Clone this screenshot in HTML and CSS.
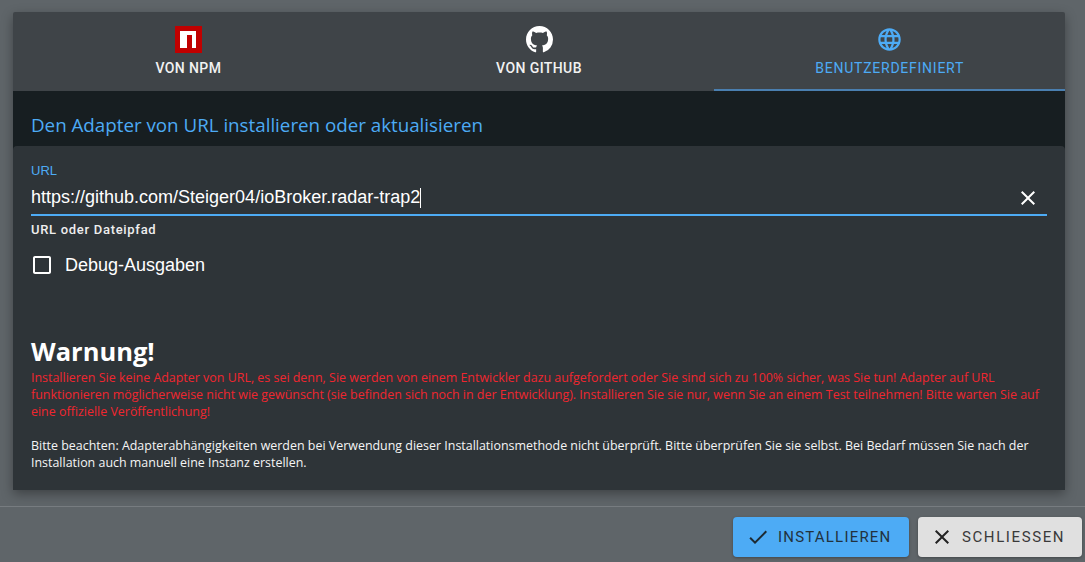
FILE: index.html
```html
<!DOCTYPE html>
<html lang="de">

<head>
    <meta charset="UTF-8">
    <meta name="viewport" content="width=device-width, initial-scale=1.0">
    <title>Adapter installieren</title>
    <link rel="stylesheet" href="styles.css">
</head>

<body>
    <div class="dialog">
        <div class="tabs">
            <div class="tab">
                <svg class="tab-icon" viewBox="0 0 27 27" width="27" height="27">
                    <rect width="27" height="27" fill="#c00000" />
                    <path d="M5 5h16v17h-4V9h-5v13H5z" fill="#fff" />
                </svg>
                <span>VON NPM</span>
            </div>
            <div class="tab">
                <svg class="tab-icon" viewBox="0 0 16 16" width="27" height="27">
                    <path fill="#fff" d="M8 0C3.58 0 0 3.58 0 8c0 3.54 2.29 6.53 5.47 7.59.4.07.55-.17.55-.38 0-.19-.01-.82-.01-1.49-2.01.37-2.53-.49-2.69-.94-.09-.23-.48-.94-.82-1.13-.28-.15-.68-.52-.01-.53.63-.01 1.08.58 1.23.82.72 1.21 1.87.87 2.33.66.07-.52.28-.87.51-1.07-1.78-.2-3.64-.89-3.64-3.95 0-.87.31-1.59.82-2.15-.08-.2-.36-1.02.08-2.12 0 0 .67-.21 2.2.82.64-.18 1.32-.27 2-.27s1.36.09 2 .27c1.53-1.04 2.2-.82 2.2-.82.44 1.1.16 1.92.08 2.12.51.56.82 1.27.82 2.15 0 3.07-1.87 3.75-3.65 3.95.29.25.54.73.54 1.48 0 1.07-.01 1.93-.01 2.2 0 .21.15.46.55.38A8.01 8.01 0 0 0 16 8c0-4.42-3.58-8-8-8z" />
                </svg>
                <span>VON GITHUB</span>
            </div>
            <div class="tab active">
                <svg class="tab-icon" viewBox="0 0 24 24" width="27" height="27">
                    <path fill="#4dabf5" d="M11.99 2C6.47 2 2 6.48 2 12s4.47 10 9.99 10C17.52 22 22 17.52 22 12S17.52 2 11.99 2zm6.93 6h-2.95c-.32-1.25-.78-2.45-1.38-3.56 1.84.63 3.37 1.91 4.33 3.56zM12 4.04c.83 1.2 1.48 2.53 1.91 3.96h-3.82c.43-1.43 1.08-2.76 1.91-3.96zM4.26 14C4.1 13.36 4 12.69 4 12s.1-1.36.26-2h3.38c-.08.66-.14 1.32-.14 2s.06 1.34.14 2H4.26zm.82 2h2.95c.32 1.25.78 2.45 1.38 3.56-1.84-.63-3.37-1.9-4.33-3.56zm2.95-8H5.08c.96-1.66 2.49-2.93 4.33-3.56C8.81 5.55 8.35 6.75 8.03 8zM12 19.96c-.83-1.2-1.48-2.53-1.91-3.96h3.82c-.43 1.43-1.08 2.76-1.91 3.96zM14.34 14H9.66c-.09-.66-.16-1.32-.16-2s.07-1.35.16-2h4.68c.09.65.16 1.32.16 2s-.07 1.34-.16 2zm.25 5.56c.6-1.11 1.06-2.31 1.38-3.56h2.95c-.96 1.65-2.49 2.93-4.33 3.56zM16.36 14c.08-.66.14-1.32.14-2s-.06-1.34-.14-2h3.38c.16.64.26 1.31.26 2s-.1 1.36-.26 2h-3.38z" />
                </svg>
                <span>BENUTZERDEFINIERT</span>
            </div>
        </div>

        <div class="dark-area">
            <h2 class="page-title">Den Adapter von URL installieren oder aktualisieren</h2>
            <div class="card">
                <label class="url-label" for="url">URL</label>
                <div class="url-row">
                    <div class="url-value" id="url">https://github.com/Steiger04/ioBroker.radar-trap2<span class="caret"></span></div>
                    <svg class="clear-icon" viewBox="0 0 24 24" width="24" height="24">
                        <path fill="#fff" d="M19 6.41 17.59 5 12 10.59 6.41 5 5 6.41 10.59 12 5 17.59 6.41 19 12 13.41 17.59 19 19 17.59 13.41 12z" />
                    </svg>
                </div>
                <div class="helper">URL oder Dateipfad</div>
                <div class="check-row">
                    <svg viewBox="0 0 24 24" width="24" height="24">
                        <path fill="#fff" d="M19 5v14H5V5h14m0-2H5c-1.1 0-2 .9-2 2v14c0 1.1.9 2 2 2h14c1.1 0 2-.9 2-2V5c0-1.1-.9-2-2-2z" />
                    </svg>
                    <span>Debug-Ausgaben</span>
                </div>
                <h1 class="warn-title">Warnung!</h1>
                <p class="warn-text">Installieren Sie keine Adapter von URL, es sei denn, Sie werden von einem Entwickler dazu aufgefordert oder Sie sind sich zu 100% sicher, was Sie tun! Adapter auf URL funktionieren möglicherweise nicht wie gewünscht (sie befinden sich noch in der Entwicklung). Installieren Sie sie nur, wenn Sie an einem Test teilnehmen! Bitte warten Sie auf eine offizielle Veröffentlichung!</p>
                <p class="note-text">Bitte beachten: Adapterabhängigkeiten werden bei Verwendung dieser Installationsmethode nicht überprüft. Bitte überprüfen Sie sie selbst. Bei Bedarf müssen Sie nach der Installation auch manuell eine Instanz erstellen.</p>
            </div>
        </div>
    </div>

    <div class="footer">
        <button class="btn btn-primary">
            <svg viewBox="0 0 24 24" width="24" height="24">
                <path fill="#1d2a33" d="M9 16.17 4.83 12l-1.42 1.41L9 19 21 7l-1.41-1.41z" />
            </svg>
            INSTALLIEREN
        </button>
        <button class="btn btn-close">
            <svg viewBox="0 0 24 24" width="24" height="24">
                <path fill="#222" d="M19 6.41 17.59 5 12 10.59 6.41 5 5 6.41 10.59 12 5 17.59 6.41 19 12 13.41 17.59 19 19 17.59 13.41 12z" />
            </svg>
            SCHLIESSEN
        </button>
    </div>
</body>

</html>
```

FILE: styles.css
```css
* {
    box-sizing: border-box;
}

html,
body {
    height: 100%;
}

body {
    margin: 0;
    padding-top: 12px;
    background-color: #5f6569;
    color: #fff;
    font-family: "Roboto", sans-serif;
    overflow: hidden;
}

.dialog {
    width: 1052px;
    margin-left: 13px;
    box-shadow: 0 4px 12px rgba(0, 0, 0, 0.35);
    border-radius: 4px 4px 0 0;
}

.tabs {
    display: flex;
    height: 79px;
    background-color: #3f4448;
    border-radius: 2px 2px 0 0;
}

.tab {
    flex: 1;
    display: flex;
    flex-direction: column;
    align-items: center;
    padding-top: 14px;
    font-size: 14px;
    font-weight: 500;
    letter-spacing: 0.4px;
    color: #f2f2f2;
}

.tab span {
    margin-top: 7px;
}

.tab.active {
    color: #4dabf5;
    font-weight: 400;
    letter-spacing: 0.75px;
    border-bottom: 2px solid #4a7fb0;
}

.tab-icon {
    display: block;
}

.dark-area {
    background-color: #171e21;
}

.page-title {
    margin: 0;
    height: 55px;
    padding: 22px 0 0 18px;
    font-family: "Open Sans", sans-serif;
    font-size: 18.75px;
    line-height: 24px;
    font-weight: 400;
    color: #4dabf5;
}

.card {
    height: 344px;
    padding: 17px 18px 0;
    background-color: #2e3438;
    border-radius: 4px 4px 0 0;
}

.url-label {
    display: block;
    font-family: "Liberation Sans", sans-serif;
    font-size: 13px;
    line-height: 16px;
    color: #4dabf5;
}

.url-row {
    display: flex;
    align-items: center;
    justify-content: space-between;
    height: 35px;
    margin-top: 2px;
    padding-right: 7px;
    border-bottom: 2px solid #4dabf5;
}

.url-value {
    font-family: "Liberation Sans", sans-serif;
    font-size: 18px;
    display: flex;
    align-items: center;
}

.caret {
    display: inline-block;
    width: 1px;
    height: 20px;
    background-color: #fff;
}

.helper {
    margin-top: 6px;
    font-family: "Roboto", sans-serif;
    font-size: 13px;
    font-weight: 500;
    line-height: 16px;
    letter-spacing: 0.7px;
    color: #eee;
}

.check-row {
    display: flex;
    align-items: center;
    gap: 11px;
    margin-top: 15px;
    margin-left: -1px;
    font-family: "Liberation Sans", sans-serif;
    font-size: 18px;
}

.warn-title {
    margin: 57px 0 0;
    font-family: "Open Sans", sans-serif;
    font-size: 25.5px;
    font-weight: 700;
    line-height: 35px;
}

.warn-text,
.note-text {
    margin: 0;
    font-family: "Open Sans", sans-serif;
    font-size: 12.45px;
    line-height: 17px;
}

.warn-text {
    color: #f0262f;
}

.note-text {
    margin-top: 17px;
    color: #f5f5f5;
}

.footer {
    display: flex;
    justify-content: flex-end;
    gap: 9px;
    margin-top: 16px;
    padding: 10px 3px 0 0;
    border-top: 1px solid #777c80;
}

.btn {
    display: flex;
    align-items: center;
    gap: 8px;
    height: 40px;
    border: none;
    border-radius: 4px;
    font-family: "Roboto", sans-serif;
    font-size: 15px;
    box-shadow: 0 1px 3px rgba(0, 0, 0, 0.3);
}

.btn-primary {
    width: 176px;
    padding: 0 0 0 13px;
    letter-spacing: 1.2px;
    background-color: #4dabf5;
    color: #22323e;
}

.btn-close {
    width: 164px;
    padding: 0 0 0 12px;
    letter-spacing: 1.6px;
    background-color: #e0e0e0;
    color: #3a3a3a;
}
```
